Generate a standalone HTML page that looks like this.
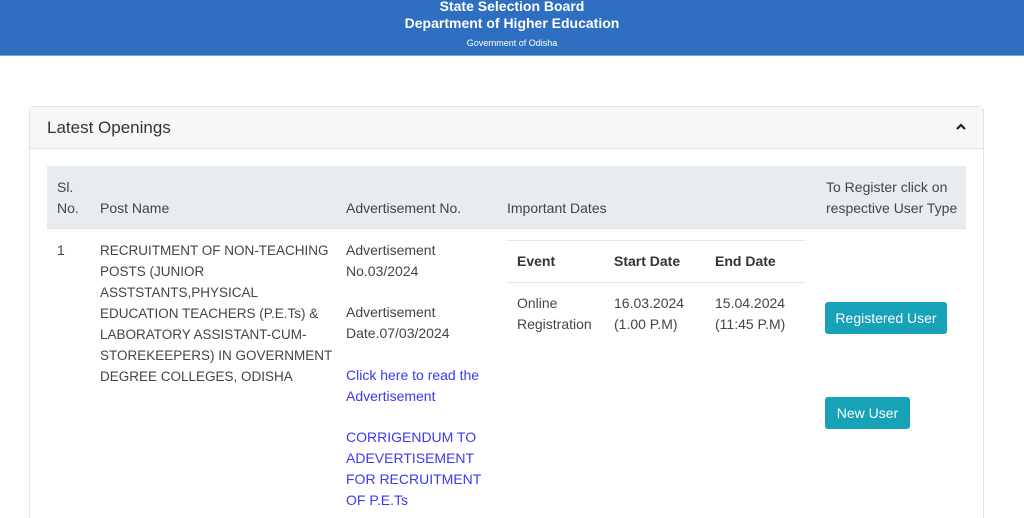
<!DOCTYPE html>
<html style="width:1024px;height:518px;overflow:hidden"><head><style>
*{margin:0;padding:0;box-sizing:border-box}
body{width:1024px;height:518px;overflow:hidden;background:#fff;font-family:"Liberation Sans",sans-serif;font-size:14px;color:#444;position:relative}
.a{position:absolute;line-height:21px;white-space:nowrap}
.hdr{position:absolute;left:0;top:0;width:1024px;height:56px;background:#2f6fc1;color:#fff;text-align:center;border-bottom:1px solid #7aa4d8}
.card{position:absolute;left:29px;top:106px;width:955px;height:420px;border:1px solid #e2e2e2;border-radius:4px}
.ch{position:absolute;left:0;top:0;width:100%;height:42px;background:#f7f7f7;border-bottom:1px solid #e2e2e2}
.th{position:absolute;left:47px;top:166px;width:919px;height:63px;background:#e9ecef;border-bottom:1px solid #dee2e6}
.lnk{color:#3a3af0}
.btn{position:absolute;background:#17a2b8;color:#fff;border-radius:3px;font-size:14px;line-height:32px;text-align:center}
.line{position:absolute;height:1px;background:#e3e3e3}
</style></head><body>
<div class="hdr">
<div class="a" style="left:0;width:1024px;top:-4px;font-weight:bold;font-size:14px">State Selection Board</div>
<div class="a" style="left:0;width:1024px;top:13px;font-weight:bold;font-size:14px">Department of Higher Education</div>
<div class="a" style="left:0;width:1024px;top:33px;font-size:9px">Government of Odisha</div>
</div>
<div class="card"><div class="ch"></div></div>
<div class="a" style="left:47px;top:117px;font-size:17px;color:#333">Latest Openings</div>
<svg style="position:absolute;left:956px;top:123px" width="10" height="8"><path d="M1 6 L5 2 L9 6" stroke="#222" stroke-width="2.2" fill="none"/></svg>
<div class="th"></div>
<div class="a" style="left:57px;top:177px">Sl.<br>No.</div>
<div class="a" style="left:100px;top:198px">Post Name</div>
<div class="a" style="left:346px;top:198px">Advertisement No.</div>
<div class="a" style="left:507px;top:198px">Important Dates</div>
<div class="a" style="left:826px;top:177px">To Register click on<br>respective User Type</div>
<div class="a" style="left:57px;top:240px">1</div>
<div class="a" style="left:100px;top:240px;font-size:13.5px">RECRUITMENT OF NON-TEACHING<br>POSTS (JUNIOR<br>ASSTSTANTS,PHYSICAL<br>EDUCATION TEACHERS (P.E.Ts) &amp;<br>LABORATORY ASSISTANT-CUM-<br>STOREKEEPERS) IN GOVERNMENT<br>DEGREE COLLEGES, ODISHA</div>
<div class="a" style="left:346px;top:240px;line-height:20.8px">Advertisement<br>No.03/2024<br><br>Advertisement<br>Date.07/03/2024<br><br><span class="lnk">Click here to read the<br>Advertisement<br><br>CORRIGENDUM TO<br>ADEVERTISEMENT<br>FOR RECRUITMENT<br>OF P.E.Ts</span></div>
<div class="line" style="left:507px;top:240px;width:298px"></div>
<div class="line" style="left:507px;top:282px;width:298px"></div>
<div class="a" style="left:517px;top:251px;font-weight:bold;color:#333">Event</div>
<div class="a" style="left:614px;top:251px;font-weight:bold;color:#333">Start Date</div>
<div class="a" style="left:715px;top:251px;font-weight:bold;color:#333">End Date</div>
<div class="a" style="left:517px;top:293px">Online<br>Registration</div>
<div class="a" style="left:614px;top:293px">16.03.2024<br>(1.00 P.M)</div>
<div class="a" style="left:715px;top:293px">15.04.2024<br>(11:45 P.M)</div>
<div class="btn" style="left:825px;top:302px;width:122px">Registered User</div>
<div class="btn" style="left:825px;top:397px;width:85px">New User</div>
</body></html>
